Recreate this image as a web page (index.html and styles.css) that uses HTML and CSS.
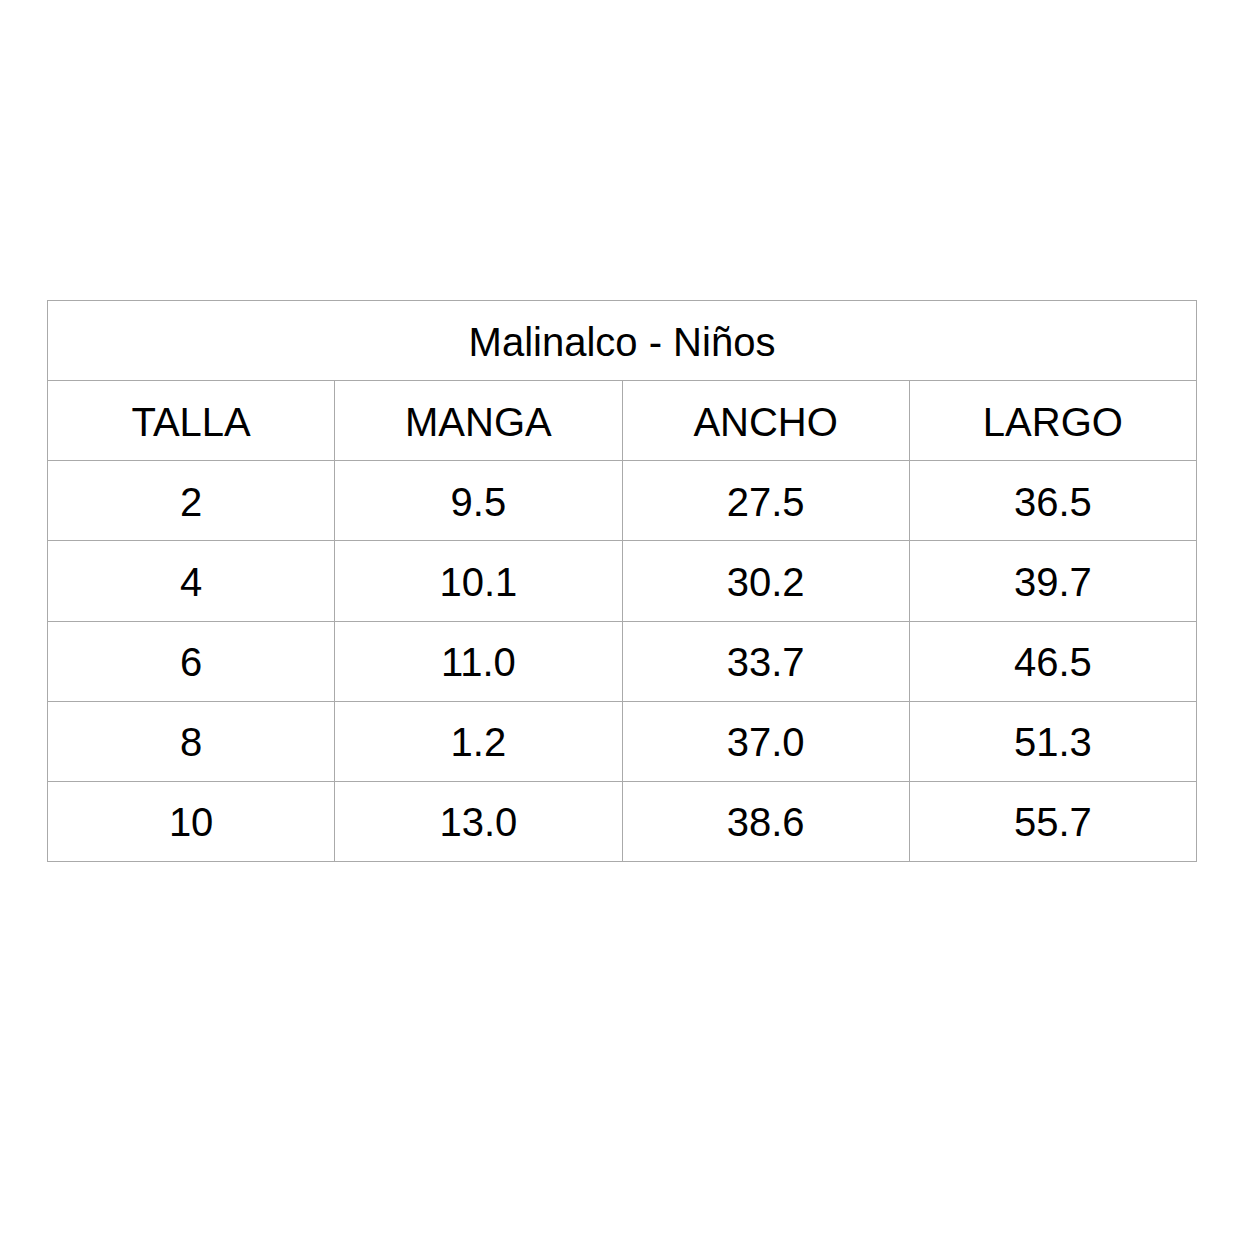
FILE: index.html
```html
<!DOCTYPE html>
<html lang="es">
<head>
<meta charset="utf-8">
<title>Malinalco - Niños</title>
<link rel="stylesheet" href="styles.css">
</head>
<body>
<main class="page">
  <table class="sizes">
    <tr class="title-row"><td colspan="4">Malinalco - Niños</td></tr>
    <tr><td>TALLA</td><td>MANGA</td><td>ANCHO</td><td>LARGO</td></tr>
    <tr><td>2</td><td>9.5</td><td>27.5</td><td>36.5</td></tr>
    <tr><td>4</td><td>10.1</td><td>30.2</td><td>39.7</td></tr>
    <tr><td>6</td><td>11.0</td><td>33.7</td><td>46.5</td></tr>
    <tr><td>8</td><td>1.2</td><td>37.0</td><td>51.3</td></tr>
    <tr><td>10</td><td>13.0</td><td>38.6</td><td>55.7</td></tr>
  </table>
</main>
</body>
</html>
```
FILE: styles.css
```css
html, body {
  margin: 0;
  padding: 0;
  background: #ffffff;
}
.page {
  padding: 300px 0 0 47px;
}
.sizes {
  border-collapse: collapse;
  width: 1150px;
  height: 562px;
  table-layout: fixed;
  font-family: "Liberation Sans", Arial, Helvetica, sans-serif;
  font-size: 40px;
  color: #000;
}
.sizes td {
  border: 1px solid #aaaaaa;
  text-align: center;
  vertical-align: middle;
  padding: 2px 0 0;
  height: 77px;
  line-height: 1;
}
```
